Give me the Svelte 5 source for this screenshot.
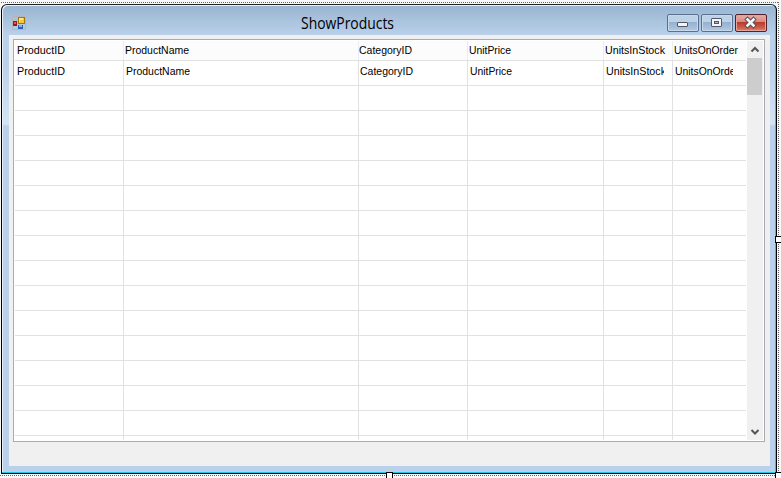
<script>
  const columns = [
    { name: 'ProductID', w: 109, pad: 2, tw: 48 },
    { name: 'ProductName', w: 235, pad: 1, tw: 64 },
    { name: 'CategoryID', w: 109, pad: 0, tw: 53 },
    { name: 'UnitPrice', w: 136, pad: 1, tw: 42 },
    { name: 'UnitsInStock', w: 69, pad: 1, tw: 60 },
    { name: 'UnitsOnOrder', w: 73, pad: 1, tw: 64 }
  ];
  const emptyRows = Array.from({ length: 15 });
</script>

{#snippet label(c)}
  <svg class="label" width={c.tw + 1} height="16"><text x="0" y="12" textLength={c.tw} lengthAdjust="spacingAndGlyphs">{c.name}</text></svg>
{/snippet}

<div class="designer">
  <div class="window">
    <header>
      <svg class="app-icon" width="14" height="14" viewBox="0 0 14 14" shape-rendering="crispEdges">
        <path d="M.5 .5h13v13H.5z" fill="none" stroke="#b3b7bb" />
        <path d="M1 5h4v5H1z" fill="#9d1712" /><path d="M2 6h2v2H2z" fill="#e45b4c" />
        <path d="M6 1h7v7H6z" fill="#a77608" /><path d="M7 2h5v5H7z" fill="#f8c72b" /><path d="M7 2h4v2H8v2H7z" fill="#ffe886" />
        <path d="M6 9h5v4H6z" fill="#315db3" /><path d="M7 9h3v2H7z" fill="#85b1f4" />
      </svg>
      <h1><svg width="98" height="22"><text x="1" y="16" textLength="93" lengthAdjust="spacingAndGlyphs">ShowProducts</text></svg></h1>
      <div class="controls">
        <button aria-label="Minimize"><svg width="30" height="16"><rect x="9.5" y="7.5" width="10" height="4" rx=".5" fill="#f5f5f5" stroke="#535666" /></svg></button>
        <button aria-label="Maximize"><svg width="30" height="16"><rect x="9.5" y="3.500" width="10" height="8" rx=".5" fill="#f5f5f5" stroke="#535666" /><rect x="12.5" y="6.500" width="4" height="2" fill="#9fb9d5" stroke="#535666" /></svg></button>
        <button class="close" aria-label="Close"><svg width="30" height="16"><path d="M11.500 4.500l6 6M17.500 4.500l-6 6" stroke="#535666" stroke-width="4.600" stroke-linecap="square" /><path d="M11.500 4.500l6 6M17.500 4.500l-6 6" stroke="#f7f7f7" stroke-width="2.500" stroke-linecap="square" /></svg></button>
      </div>
    </header>
    <main>
      <div class="grid">
        <div class="table">
          <div class="row head">
            {#each columns as c}<div class="cell" style:width="{c.w}px" style:padding-left="{c.pad}px">{@render label(c)}</div>{/each}
          </div>
          <div class="row first">
            {#each columns as c}<div class="cell" style:width="{c.w}px" style:padding-left="{c.pad + (c.name === 'ProductID' ? 0 : 1)}px"><span class="clip">{@render label(c)}</span></div>{/each}
          </div>
          {#each emptyRows as _}
            <div class="row">{#each columns as c}<div class="cell" style:width="{c.w}px"></div>{/each}</div>
          {/each}
        </div>
        <div class="scroll">
          <svg width="16" height="17"><path d="M4.500 10.500 8 7l3.500 3.500" /></svg>
          <div class="thumb"></div>
          <svg class="down" width="16" height="17"><path d="M4.500 7 8 10.500 11.500 7" /></svg>
        </div>
      </div>
    </main>
  </div>
  <i class="dots top"></i><i class="dots right"></i><i class="dots bottom"></i>
  <i class="handle east"></i><i class="handle south"></i><i class="handle corner"></i>
</div>

<style>
  :global(body) { overflow: hidden; }
  * { box-sizing: border-box; }
  .designer { position: relative; width: 781px; height: 478px; background: #f7f7f8; padding: 4px 0 0 1px; overflow: hidden; }
  .window {
    width: 776px; height: 470px; border: 1px solid #000; border-top-color: #222; border-radius: 6px 6px 0 0;
    padding: 0 5px 7px 7px;
    background: linear-gradient(#99b4d1 0, #b9d1ea 30px, #b9d1ea 60px, #d5e4f4 119px, #b9d1ea 121px);
    box-shadow: inset -1px -1px #22c8e5, inset 1px 1px #e9f0f8;
  }
  header { height: 30px; display: flex; }
  .app-icon { flex: none; margin: 11px 0 0 3px; }
  h1 { margin: 0; flex: 1; padding: 8px 0 0 274px; height: 30px; font: 16px "Open Sans", "Noto Sans", sans-serif; }
  h1 svg { display: block; overflow: visible; }
  .controls { display: flex; gap: 2px; padding: 9px 4px 0 0; }
  button {
    width: 32px; height: 18px; padding: 0; border: 1px solid #59708f; border-radius: 2px;
    background: linear-gradient(#bdd1e7 0 45%, #95b0ce 46%, #b1cae4);
    box-shadow: inset 0 0 0 1px #c8d9ec;
  }
  button svg { display: block; }
  .close { border-color: #51202b; background: linear-gradient(#e2a69d 0 10%, #d6877c 45%, #b83c28 46%, #cf5f4d 80%, #d98875); box-shadow: inset 0 0 0 1px #e3a59c; }
  main { height: 431px; width: 761px; padding: 4px; background: #f0f0f0; }
  .grid { width: 752px; height: 403px; border: 1px solid #a8abb0; background: #fff; padding: 1px; display: flex; justify-content: space-between; }
  .table { width: 731px; height: 399px; overflow: hidden; }
  .row { display: flex; height: 25px; border-bottom: 1px solid #e1e1e1; }
  .cell { flex: none; border-right: 1px solid #e1e1e1; overflow: hidden; }
  .cell:last-child { border-right: 0; }
  .head { height: 20px; background: #fcfcfc; }
  .head .cell { border-color: #e6eef8; }
  .label { display: block; overflow: visible; font: 11.5px "Liberation Sans", Arial, sans-serif; }
  .head .label { margin-top: 1px; }
  .first .label { margin-top: 2px; }
  .clip { display: block; overflow: hidden; max-width: calc(100% - 8px); }
  .first .cell:last-child .clip { max-width: 58px; }
  .scroll { width: 16px; height: 399px; background: #f0f0f0; display: flex; flex-direction: column; }
  .scroll svg { flex: none; }
  .scroll path { fill: none; stroke: #555; stroke-width: 2; }
  .thumb { height: 37px; background: #cdcdcd; margin-right: 1px; }
  .down { margin-top: auto; }
  .dots { position: absolute; }
  .top, .bottom { height: 1px; left: 1px; right: 2px; background: repeating-linear-gradient(90deg, #666 0 1px, #f7f7f8 1px 2px); }
  .top { top: 2px; }
  .bottom { top: 475px; left: 0; }
  .right { width: 1px; left: 778px; top: 2px; height: 473px; background: repeating-linear-gradient(#666 0 1px, #f7f7f8 1px 2px); }
  .handle { position: absolute; background: #fff; border: 1px solid #000; width: 7px; height: 7px; }
  .east { left: 775px; top: 236px; }
  .south { left: 386px; top: 472px; }
  .corner { left: 775px; top: 472px; }
</style>
